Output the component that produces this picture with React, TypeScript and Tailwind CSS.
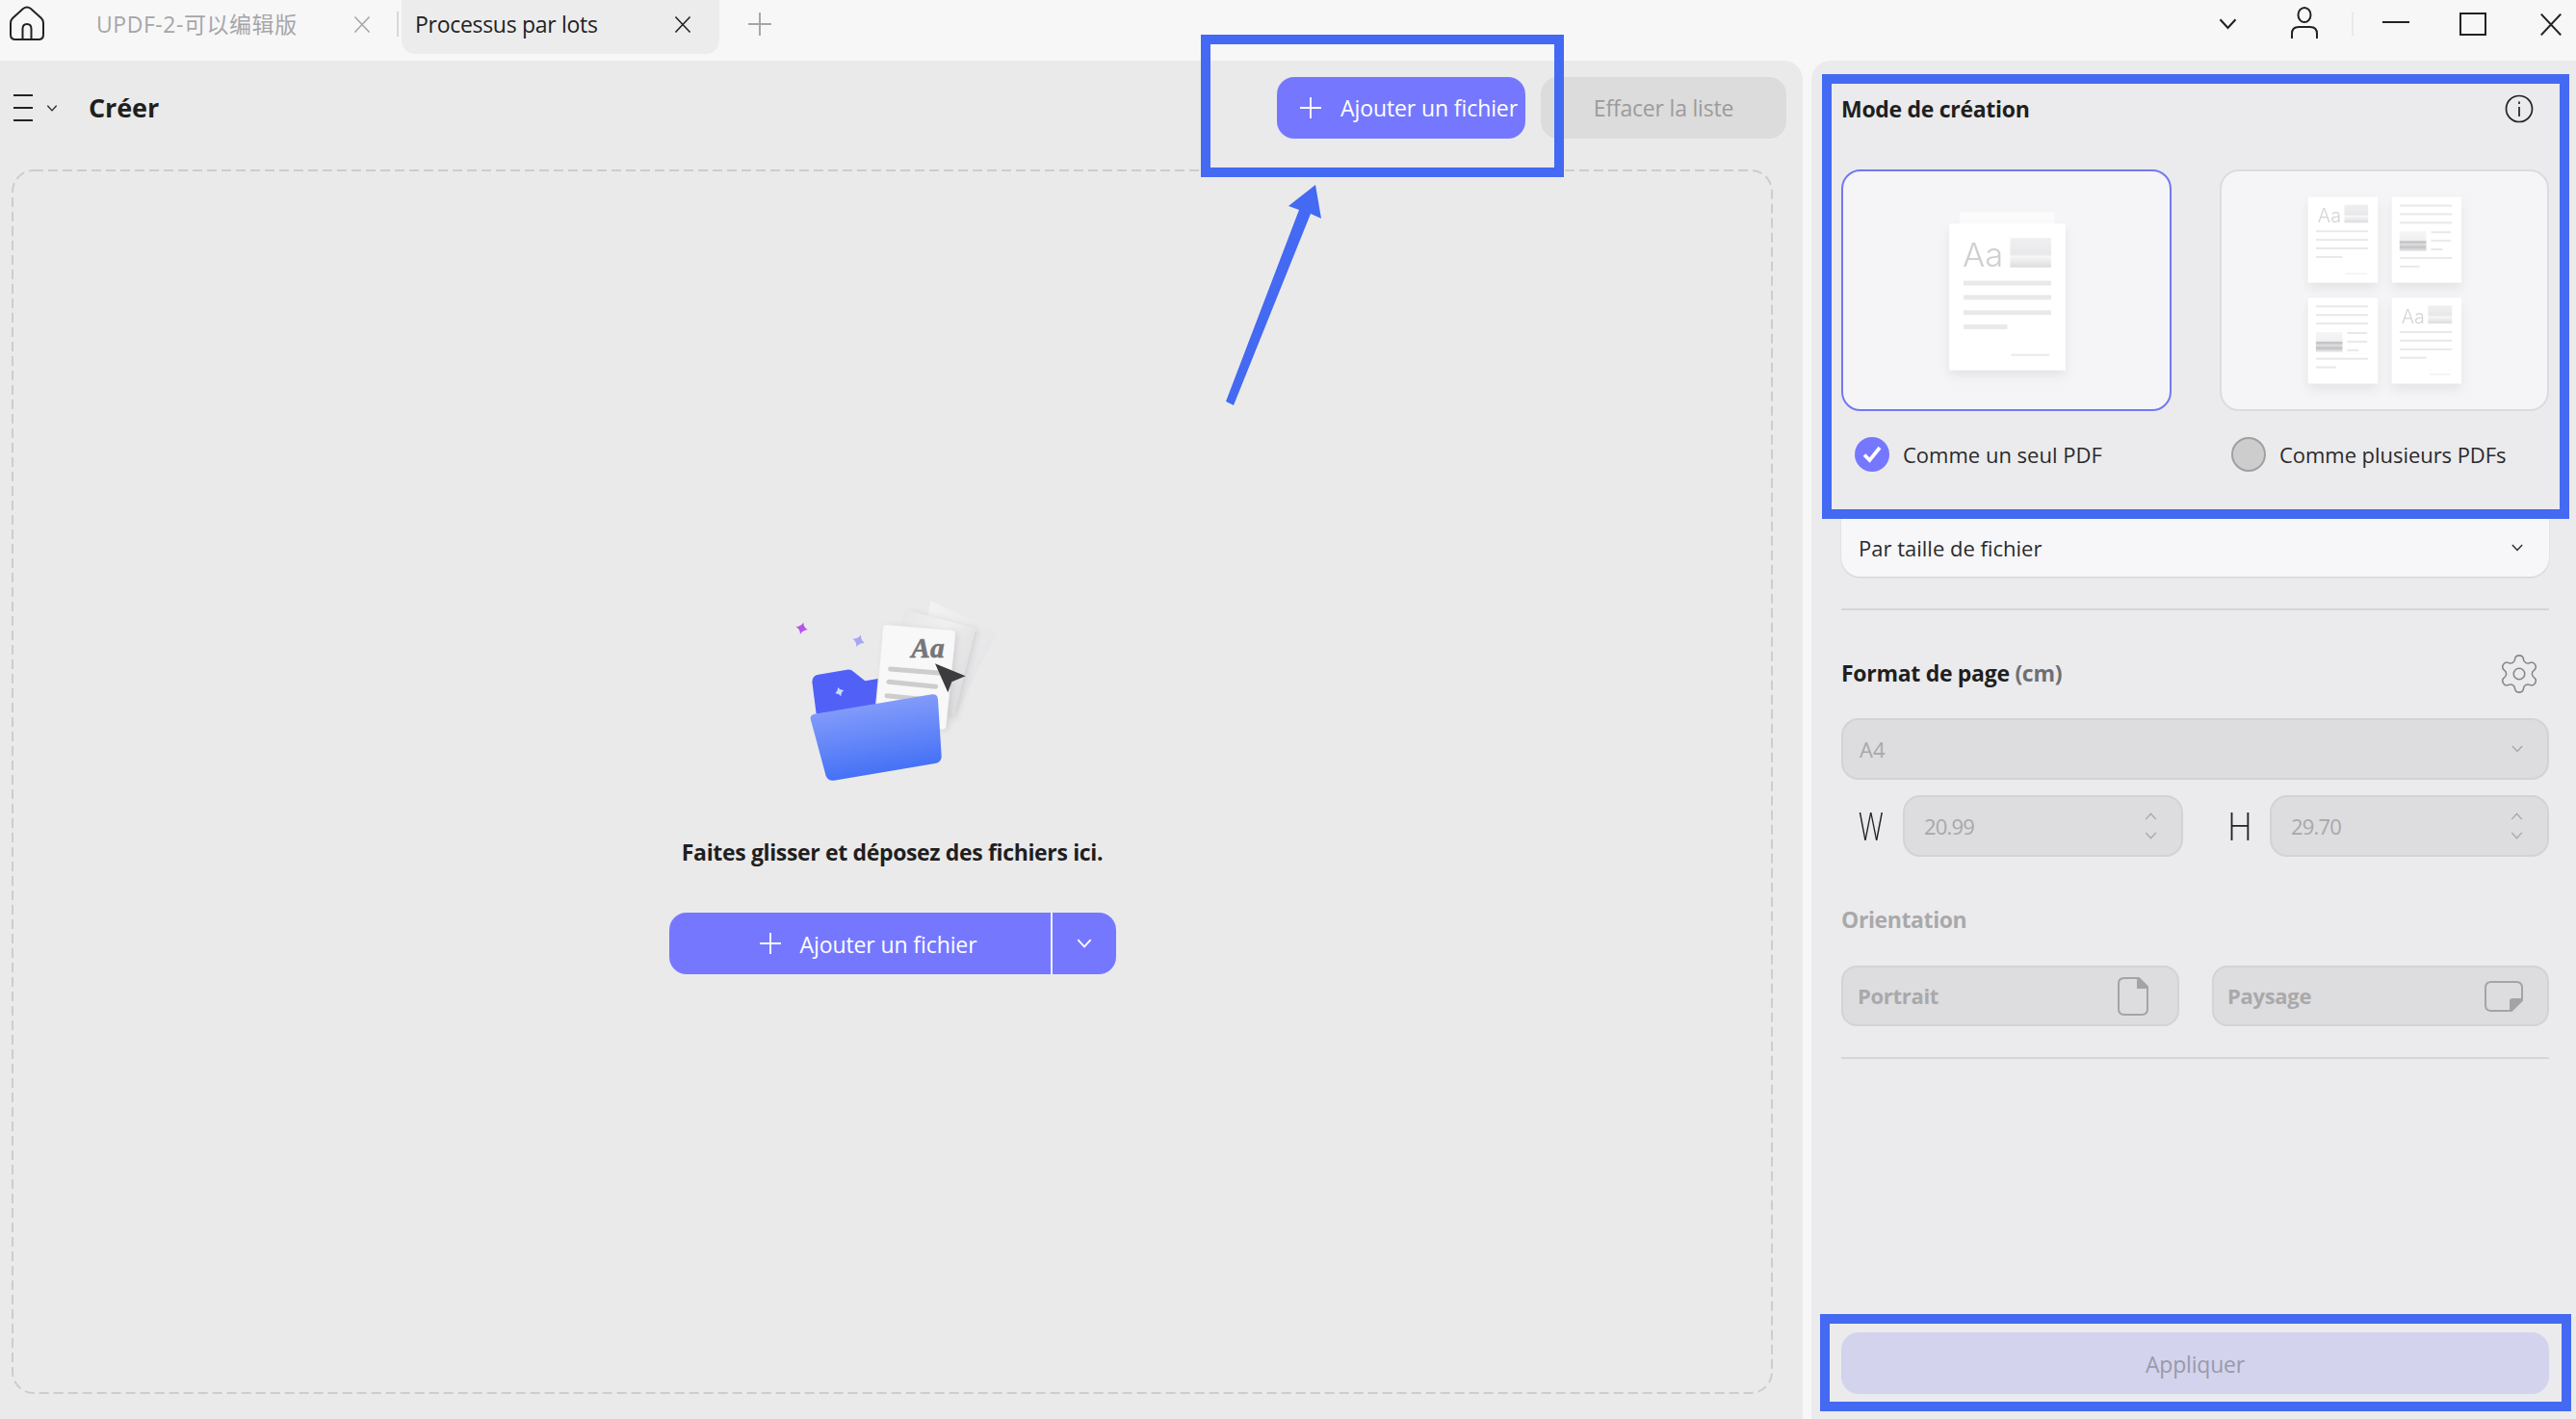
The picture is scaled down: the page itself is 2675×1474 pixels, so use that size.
import { Settings } from "lucide-react";

const font = "font-['Open_Sans','Noto_Sans_CJK_SC',sans-serif]";

function Cross({ className }: { className?: string }) {
  return (
    <svg viewBox="0 0 18 18" className={className} fill="none" stroke="currentColor" strokeWidth="1.6">
      <path d="M1 0.5 17 17.5M17 0.5 1 17.5" />
    </svg>
  );
}

function Plus({ className }: { className?: string }) {
  return (
    <svg viewBox="0 0 22 22" className={className} fill="none" stroke="currentColor" strokeWidth="1.8">
      <path d="M11 0v22M0 11h22" />
    </svg>
  );
}

function Chevron({ className, up }: { className?: string; up?: boolean }) {
  return (
    <svg viewBox="0 0 14 9" className={className} fill="none" stroke="currentColor" strokeWidth="1.6">
      <path d={up ? "M1 8 7 1.5 13 8" : "M1 1 7 7.5 13 1"} />
    </svg>
  );
}

function DocA({ x, y }: { x: number; y: number }) {
  return (
    <g transform={`translate(${x} ${y})`}>
      <rect width="73" height="90" fill="#fff" filter="url(#pageShadow)" />
      <text x="10" y="27" fontSize="20" fill="#d4d4d6" fontFamily="Inter, sans-serif" fontWeight="300">Aa</text>
      <rect x="38" y="8" width="25" height="19" fill="url(#thumb)" />
      <rect x="8" y="35" width="55" height="2" fill="#e8e8ea" />
      <rect x="8" y="44" width="55" height="2" fill="#e8e8ea" />
      <rect x="8" y="53" width="55" height="2" fill="#e8e8ea" />
      <rect x="8" y="62" width="28" height="2" fill="#e8e8ea" />
      <rect x="39" y="80" width="23" height="1" fill="#ececee" />
    </g>
  );
}

function DocB({ x, y }: { x: number; y: number }) {
  return (
    <g transform={`translate(${x} ${y})`}>
      <rect width="73" height="90" fill="#fff" filter="url(#pageShadow)" />
      <rect x="8" y="8" width="55" height="2" fill="#e8e8ea" />
      <rect x="8" y="17" width="55" height="2" fill="#e8e8ea" />
      <rect x="8" y="26" width="55" height="2" fill="#e8e8ea" />
      <rect x="8" y="36" width="28" height="21" fill="url(#thumbDark)" />
      <rect x="41" y="36" width="21" height="2" fill="#e8e8ea" />
      <rect x="41" y="45" width="21" height="2" fill="#e8e8ea" />
      <rect x="41" y="54" width="12" height="2" fill="#e8e8ea" />
      <rect x="8" y="63" width="55" height="2" fill="#e8e8ea" />
      <rect x="8" y="72" width="21" height="2" fill="#e8e8ea" />
    </g>
  );
}

function ThumbDefs() {
  return (
    <defs>
      <linearGradient id="thumb" x1="0" y1="0" x2="0" y2="1">
        <stop offset="0" stopColor="#f0f0f1" />
        <stop offset="0.55" stopColor="#e8e8ea" />
        <stop offset="0.63" stopColor="#f7f7f8" />
        <stop offset="1" stopColor="#dcdcde" />
      </linearGradient>
      <linearGradient id="thumbDark" x1="0" y1="0" x2="0" y2="1">
        <stop offset="0" stopColor="#f6f6f7" />
        <stop offset="0.45" stopColor="#f0f0f1" />
        <stop offset="0.52" stopColor="#bcbcbe" />
        <stop offset="0.66" stopColor="#e0e0e2" />
        <stop offset="0.8" stopColor="#c2c2c4" />
        <stop offset="1" stopColor="#ececee" />
      </linearGradient>
      <filter id="pageShadow" x="-30%" y="-20%" width="160%" height="150%">
        <feDropShadow dx="0" dy="6" stdDeviation="6" floodColor="#000" floodOpacity="0.07" />
      </filter>
    </defs>
  );
}

function SinglePage() {
  return (
    <svg viewBox="0 0 342 250" className="h-full w-full blur-[0.4px]">
      <ThumbDefs />
      <rect x="122" y="43" width="100" height="14" fill="#fbfbfc" />
      <rect x="111" y="55" width="122" height="154" fill="#fff" filter="url(#pageShadow)" />
      <text x="125" y="100" fontSize="35" fill="#d0d0d2" fontFamily="Inter, sans-serif" fontWeight="300">Aa</text>
      <rect x="175" y="70" width="43" height="31" fill="url(#thumb)" />
      <rect x="126" y="115" width="92" height="5" fill="#e9e9eb" />
      <rect x="126" y="130" width="92" height="5" fill="#e9e9eb" />
      <rect x="126" y="146" width="92" height="5" fill="#e9e9eb" />
      <rect x="126" y="161" width="46" height="5" fill="#e9e9eb" />
      <rect x="176" y="192" width="40" height="2" fill="#e9e9eb" />
    </svg>
  );
}

function MultiPage() {
  return (
    <svg viewBox="0 0 340 250" className="h-full w-full blur-[0.4px]">
      <ThumbDefs />
      <DocA x={90} y={27} />
      <DocB x={178} y={27} />
      <DocB x={90} y={133} />
      <DocA x={178} y={133} />
    </svg>
  );
}

function Star({ x, y, r, rot, fill }: { x: number; y: number; r: number; rot: number; fill: string }) {
  const c = r * 0.22;
  return (
    <path
      transform={`translate(${x} ${y}) rotate(${rot})`}
      d={`M0 ${-r}Q${c} ${-c} ${r} 0Q${c} ${c} 0 ${r}Q${-c} ${c} ${-r} 0Q${-c} ${-c} 0 ${-r}Z`}
      fill={fill}
    />
  );
}

function FolderArt() {
  return (
    <svg viewBox="0 0 840 720" className="mr-[12px] h-[240px] w-[280px]">
      <defs>
        <linearGradient id="folderFront" x1="0.35" y1="0" x2="0.6" y2="1">
          <stop offset="0" stopColor="#8ca2fb" />
          <stop offset="1" stopColor="#3e6cf6" />
        </linearGradient>
        <linearGradient id="sheet" x1="0" y1="0" x2="1" y2="0.6">
          <stop offset="0" stopColor="#e6e6e7" />
          <stop offset="0.55" stopColor="#f0f0f1" />
          <stop offset="1" stopColor="#dcdcde" />
        </linearGradient>
        <linearGradient id="sheetBack" x1="0" y1="0" x2="1" y2="1">
          <stop offset="0" stopColor="#f4f4f5" />
          <stop offset="1" stopColor="#e0e0e2" />
        </linearGradient>
        <filter id="soft" x="-20%" y="-20%" width="140%" height="140%">
          <feDropShadow dx="8" dy="3" stdDeviation="9" floodColor="#000" floodOpacity="0.1" />
        </filter>
      </defs>
      <path d="M556 72 762 170 640 420 520 300Z" fill="url(#sheetBack)" />
      <path d="M482 102 696 158 626 440 440 340Z" fill="url(#sheet)" filter="url(#soft)" />
      <path d="M420 148 622 165Q634 166 633 178L604 462Q603 474 590 472L395 452Q384 450 385 438L408 158Q409 147 420 148Z" fill="#f8f8f9" filter="url(#soft)" />
      <text x="496" y="248" fontSize="88" fontWeight="700" fontStyle="italic" fill="#767678" stroke="#767678" strokeWidth="2" fontFamily="Liberation Serif, serif">Aa</text>
      <path d="M431 285 590 298M426 325 572 340M420 368 520 378" stroke="#cdcdce" strokeWidth="15" strokeLinecap="round" fill="none" />
      <path d="M570 268 665 307 622 325 610 358Z" fill="#3c3c3e" />
      <path d="M187 325Q187 305 207 302L295 287Q308 285 316 293L352 322 392 315 384 400 200 425Z" fill="#5161f8" />
      <path d="M182 440Q180 428 195 425L560 364Q578 362 579 380L590 555Q591 572 575 578L255 632Q237 635 230 618Z" fill="url(#folderFront)" />
      <Star x={155} y={158} r={19} rot={15} fill="#b455e8" />
      <Star x={332} y={197} r={20} rot={20} fill="#a6a6f4" />
      <Star x={272} y={356} r={15} rot={-20} fill="#c4dcfb" />
    </svg>
  );
}

function LeftPanel() {
  return (
    <section className="flex w-[1872px] flex-col rounded-tr-[20px] bg-[#eaeaeb] pt-[17px]">
      <div className="flex h-[64px] items-center">
        <div className="ml-[14px] flex h-[28px] w-[20px] flex-col justify-between">
          <span className="h-[2px] bg-[#222]" />
          <span className="h-[2px] bg-[#222]" />
          <span className="h-[2px] bg-[#222]" />
        </div>
        <Chevron className="ml-[14px] h-[7px] w-[12px] text-[#222]" />
        <h1 className="ml-[32px] text-[27px] leading-[30px] font-bold tracking-[-0.1px] text-[#1f1f1f]">Créer</h1>
        <button className="ml-auto flex h-[64px] w-[258px] items-center rounded-[18px] bg-[#7578ff] pl-[24px] text-white">
          <Plus className="h-[22px] w-[22px]" />
          <span className="ml-[20px] pt-[1px] text-[23px] tracking-[-0.1px]">Ajouter un fichier</span>
        </button>
        <button className="mr-[17px] ml-[16px] flex h-[64px] w-[255px] items-center justify-center rounded-[18px] bg-[#dcdcdc] pt-[1px] text-[23px] tracking-[-0.2px] text-[#9b9b9b]">
          Effacer la liste
        </button>
      </div>
      <div className="relative mt-[32px] ml-[12px] flex h-[1272px] w-[1829px] flex-col items-center pt-[424px]">
        <svg className="absolute top-0 left-0 h-[1272px] w-[1829px]" fill="none">
          <rect x="1" y="1" width="1827" height="1270" rx="22" stroke="#cdcdcf" strokeWidth="2" strokeDasharray="10 5" />
        </svg>
        <FolderArt />
        <p className="mt-[30px] text-[23px] leading-[30px] font-bold tracking-[-0.35px] text-[#1f1f1f]">
          Faites glisser et déposez des fichiers ici.
        </p>
        <div className="mt-[48px] flex h-[64px] w-[464px] rounded-[18px] bg-[#7578ff] text-white">
          <button className="flex w-[398px] items-center border-r-2 border-[#f0f0ff] pl-[94px]">
            <Plus className="h-[22px] w-[22px]" />
            <span className="ml-[20px] pt-[2px] text-[23px] tracking-[-0.1px]">Ajouter un fichier</span>
          </button>
          <button className="flex flex-1 items-center justify-center">
            <Chevron className="h-[10px] w-[18px]" />
          </button>
        </div>
      </div>
    </section>
  );
}

function RightPanel() {
  return (
    <aside className="ml-[9px] flex w-[794px] flex-col rounded-tl-[20px] bg-[#ebebed] pt-[35px] pr-[28px] pb-[26px] pl-[31px]">
      <div className="flex h-[30px] items-center justify-between pr-[16px]">
        <h2 className="text-[23px] font-bold tracking-[-0.3px] text-[#1f1f1f]">Mode de création</h2>
        <svg viewBox="0 0 30 30" className="h-[30px] w-[30px] text-[#222]" fill="none" stroke="currentColor" strokeWidth="1.7">
          <circle cx="15" cy="15" r="13.5" />
          <path d="M15 13v10M15 7.5v2.5" />
        </svg>
      </div>

      <div className="mt-[48px] flex h-[251px] justify-between">
        <div className="w-[343px] rounded-[20px] border-2 border-[#7578f0] bg-[#f5f5f8]">
          <SinglePage />
        </div>
        <div className="w-[342px] rounded-[20px] border-2 border-[#dcdcdf] bg-[#f5f5f8]">
          <MultiPage />
        </div>
      </div>

      <div className="mt-[27px] flex h-[36px] items-center text-[22px] text-[#2a2a2a]">
        <div className="flex w-[393px] items-center gap-[14px] pl-[14px]">
          <span className="flex h-[36px] w-[36px] items-center justify-center rounded-full bg-[#7578ff]">
            <svg viewBox="0 0 20 18" className="h-[18px] w-[20px]" fill="none" stroke="#fff" strokeWidth="3.6">
              <path d="M2 9.5 7.5 15 18 2" />
            </svg>
          </span>
          <span className="pt-[1px]">Comme un seul PDF</span>
        </div>
        <div className="flex items-center gap-[14px] pl-[12px]">
          <span className="h-[36px] w-[36px] rounded-full border-2 border-[#a0a0a0] bg-[#cdcdcd]" />
          <span className="pt-[1px] tracking-[-0.05px]">Comme plusieurs PDFs</span>
        </div>
      </div>

      <div className="mt-[49px] flex h-[60px] items-center justify-between rounded-b-[20px] bg-[#f7f7f9] pr-[27px] pl-[18px] text-[#2a2a2a] shadow-[0_1px_2px_rgba(0,0,0,0.12)]">
        <span className="text-[22px]">Par taille de fichier</span>
        <Chevron className="h-[8px] w-[12px]" />
      </div>

      <div className="mt-[33px] h-[2px] bg-[#d6d6d9]" />

      <div className="mt-[46px] flex h-[40px] items-center justify-between pr-[8px]">
        <h2 className="mb-[2px] text-[23px] font-bold tracking-[-0.3px] text-[#1f1f1f]">
          Format de page <span className="text-[#6f6f72]">(cm)</span>
        </h2>
        <Settings className="h-[46px] w-[46px] text-[#858588]" strokeWidth={0.8} />
      </div>

      <div className="mt-[26px] flex h-[64px] items-center justify-between rounded-[18px] border-2 border-[#d3d3d5] bg-[#dddcdf] pr-[25px] pl-[17px] text-[#a8a8aa]">
        <span className="pt-[1px] text-[22px]">A4</span>
        <Chevron className="h-[8px] w-[12px]" />
      </div>

      <div className="mt-[16px] flex h-[64px] items-center">
        <span className="w-[64px] pl-[18px] text-[40px] leading-none font-light text-[#222]">
          <span className="inline-block origin-left scale-x-[0.72]">W</span>
        </span>
        <div className="flex h-[64px] w-[291px] items-center justify-between rounded-[18px] border-2 border-[#d3d3d5] bg-[#dddcdf] pr-[25px] pl-[20px] text-[22px] tracking-[-0.8px] text-[#a8a8aa]">
          20.99
          <span className="flex flex-col gap-[12px]">
            <Chevron up className="h-[8px] w-[13px]" />
            <Chevron className="h-[8px] w-[13px]" />
          </span>
        </div>
        <span className="w-[90px] pl-[46px] text-[40px] leading-none font-light text-[#222]">
          <span className="inline-block origin-left scale-x-[0.9]">H</span>
        </span>
        <div className="flex h-[64px] w-[290px] items-center justify-between rounded-[18px] border-2 border-[#d3d3d5] bg-[#dddcdf] pr-[25px] pl-[20px] text-[22px] tracking-[-0.8px] text-[#a8a8aa]">
          29.70
          <span className="flex flex-col gap-[12px]">
            <Chevron up className="h-[8px] w-[13px]" />
            <Chevron className="h-[8px] w-[13px]" />
          </span>
        </div>
      </div>

      <h2 className="mt-[50px] text-[23px] leading-[30px] font-bold tracking-[-0.4px] text-[#a9a9ab]">Orientation</h2>

      <div className="mt-[33px] flex justify-between">
        <div className="flex h-[63px] w-[351px] items-center justify-between rounded-[16px] border-2 border-[#d3d3d5] bg-[#dddcdf] pr-[30px] pl-[15px] text-[22px] font-bold tracking-[-0.3px] text-[#a9a9ab]">
          Portrait
          <svg viewBox="0 0 32 40" className="h-[40px] w-[32px] text-[#a4a4a6]" fill="none" stroke="currentColor" strokeWidth="2">
            <path d="M7 1H22L31 10V33Q31 39 25 39H7Q1 39 1 33V7Q1 1 7 1Z" />
            <path d="M21 1 31 11H21Z" fill="currentColor" />
          </svg>
        </div>
        <div className="flex h-[63px] w-[350px] items-center justify-between rounded-[16px] border-2 border-[#d3d3d5] bg-[#dddcdf] pr-[25px] pl-[14px] text-[22px] font-bold tracking-[-0.3px] text-[#a9a9ab]">
          Paysage
          <svg viewBox="0 0 40 32" className="h-[32px] w-[40px] text-[#a4a4a6]" fill="none" stroke="currentColor" strokeWidth="2">
            <path d="M7 1H33Q39 1 39 7V20L28 31H7Q1 31 1 25V7Q1 1 7 1Z" />
            <path d="M39 19 27 31V21Q27 19 29 19Z" fill="currentColor" />
          </svg>
        </div>
      </div>

      <div className="mt-[32px] h-[2px] bg-[#d6d6d9]" />

      <button className="mt-auto h-[64px] rounded-[18px] bg-[#d3d3ed] pt-[2px] text-[23px] tracking-[-0.2px] text-[#9a9aa9]">
        Appliquer
      </button>
    </aside>
  );
}

export default function App() {
  return (
    <div className={`relative flex h-[1474px] w-[2675px] flex-col overflow-hidden bg-[#f7f7f8] ${font}`}>
      <header className="flex h-[63px] shrink-0 items-start">
        <svg viewBox="0 0 36 36" className="mt-[6px] ml-[10px] h-[36px] w-[36px] text-[#222]" fill="none" stroke="currentColor" strokeWidth="2">
          <path d="M3 13 14 3Q18 0 22 3L33 13Q35 15 35 18V30Q35 35 30 35H6Q1 35 1 30V18Q1 15 3 13Z" />
          <path d="M13.5 35V24Q13.5 19 18 19T22.5 24V35" />
        </svg>
        <div className="ml-[54px] flex h-[50px] w-[267px] items-center text-[23px] tracking-[0.55px] text-[#a6a6a8]">UPDF-2-可以编辑版</div>
        <div className="flex h-[50px] items-center">
          <Cross className="h-[17px] w-[18px] text-[#a6a6a8]" />
          <span className="ml-[27px] h-[26px] w-[2px] bg-[#d8d8da]" />
        </div>
        <div className="ml-[3px] flex h-[56px] w-[330px] items-center justify-between rounded-b-[14px] bg-[#ececed] pr-[29px] pb-[6px] pl-[14px] text-[23px] tracking-[-0.3px] text-[#222]">
          Processus par lots
          <Cross className="h-[17px] w-[18px]" />
        </div>
        <div className="ml-[30px] flex h-[50px] items-center">
          <Plus className="h-[24px] w-[24px] text-[#a6a6a8]" />
        </div>

        <div className="ml-auto flex h-[50px] items-center text-[#222]">
          <Chevron className="h-[12px] w-[23px]" />
          <svg viewBox="0 0 30 34" className="mb-[2px] ml-[53px] h-[34px] w-[30px]" fill="none" stroke="currentColor" strokeWidth="2">
            <ellipse cx="15" cy="8.5" rx="6.5" ry="7.5" />
            <path d="M2 33V28Q2 21 9 21H21Q28 21 28 28V33" />
          </svg>
          <span className="ml-[34px] h-[24px] w-[2px] bg-[#e8e8ea]" />
          <span className="mb-[4px] ml-[30px] h-[2px] w-[28px] bg-[#222]" />
          <span className="ml-[52px] h-[24px] w-[28px] border-2 border-[#222]" />
          <Cross className="mr-[14px] ml-[55px] h-[23px] w-[24px]" />
        </div>
      </header>

      <main className="flex min-h-0 flex-1">
        <LeftPanel />
        <RightPanel />
      </main>

      {/* annotations drawn over the screenshot */}
      <div className="absolute top-[36px] left-[1247px] h-[148px] w-[377px] border-[10px] border-[#4469f2]" />
      <div className="absolute top-[77px] left-[1892px] h-[462px] w-[776px] border-[10px] border-[#4469f2]" />
      <div className="absolute top-[1365px] left-[1890px] h-[101px] w-[780px] border-[10px] border-[#4469f2]" />
      <svg className="absolute top-[180px] left-[1260px] h-[250px] w-[130px]" viewBox="1260 180 130 250">
        <path d="M1366 192 1372 227 1361 222 1281 421 1273 417 1349 218 1338 214Z" fill="#4469f2" />
      </svg>
    </div>
  );
}
